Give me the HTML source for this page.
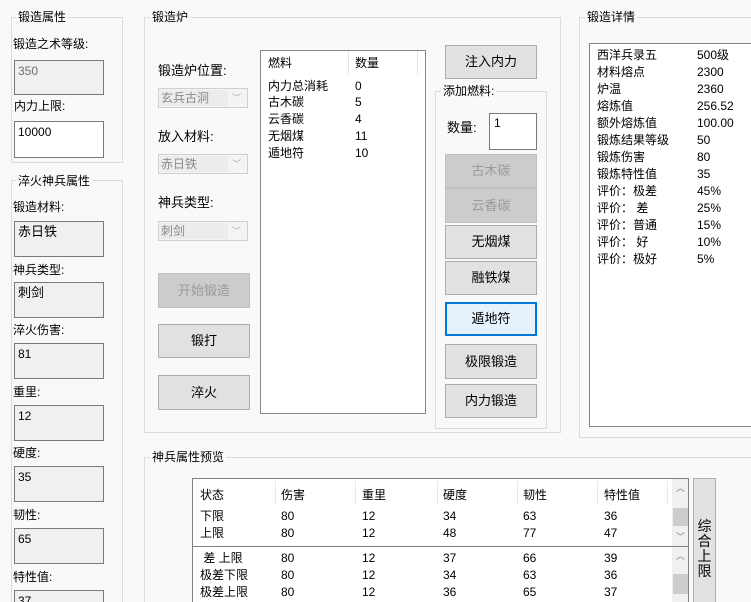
<!DOCTYPE html>
<html style="width:751px;height:602px;overflow:hidden"><head><meta charset="utf-8"><style>
*{box-sizing:border-box;margin:0;padding:0}
body{width:751px;height:602px;overflow:hidden;background:#f9f9f9;font-family:"Liberation Sans","Noto Sans CJK SC","WenQuanYi Zen Hei",sans-serif;font-size:12px;color:#000;position:relative}
.a{position:absolute;white-space:nowrap;line-height:14px}
.g{position:absolute;border:1px solid #dcdcdc}
.gt{position:absolute;background:#f9f9f9;padding:0 2px;line-height:14px}
.tb{position:absolute;border:1px solid #7a7a7a;background:#f0f0f0;padding:3px 3px;line-height:14px}
.tb.w{background:#fff}
.tb.d{color:#6d6d6d}
.cb{position:absolute;border:1px solid #cfcfcf;background:#f4f4f4;color:#8a8a8a;height:20px;line-height:18px;padding-left:2px}
.cb i{position:absolute;left:1px;top:1px;width:68px;height:16px;background:#ececec}
.cb span{position:relative}
.cb b{position:absolute;right:6px;top:0;font-weight:normal;font-size:9px;color:#aaa}
.bt{position:absolute;border:1px solid #adadad;background:#e1e1e1;text-align:center;font-size:13px}
.bt.dis{background:#cccccc;border-color:#bfbfbf;color:#9a9a9a}
.bt.f{border:2px solid #0078d7;background:#e5f1fb}
.lv{position:absolute;border:1px solid #828790;background:#fff;overflow:hidden}
.sb{position:absolute;background:#f0f0f0;width:17px}
</style></head><body>

<div class="g" style="left:11px;top:17px;width:112px;height:146px"></div>
<div class="gt" style="left:16px;top:10px">锻造属性</div>
<div class="a" style="left:13px;top:37px">锻造之术等级:</div>
<div class="tb d" style="left:14px;top:60px;width:90px;height:35px">350</div>
<div class="a" style="left:14px;top:99px">内力上限:</div>
<div class="tb w" style="left:14px;top:121px;width:90px;height:37px">10000</div>

<div class="g" style="left:11px;top:180px;width:112px;height:430px"></div>
<div class="gt" style="left:16px;top:174px">淬火神兵属性</div>
<div class="a" style="left:13px;top:200px">锻造材料:</div>
<div class="tb" style="left:14px;top:221px;width:90px;height:36px;font-size:13px">赤日铁</div>
<div class="a" style="left:13px;top:263px">神兵类型:</div>
<div class="tb" style="left:14px;top:282px;width:90px;height:36px;font-size:13px">刺剑</div>
<div class="a" style="left:13px;top:323px">淬火伤害:</div>
<div class="tb" style="left:14px;top:343px;width:90px;height:36px">81</div>
<div class="a" style="left:13px;top:385px">重里:</div>
<div class="tb" style="left:14px;top:405px;width:90px;height:36px">12</div>
<div class="a" style="left:13px;top:446px">硬度:</div>
<div class="tb" style="left:14px;top:466px;width:90px;height:36px">35</div>
<div class="a" style="left:13px;top:508px">韧性:</div>
<div class="tb" style="left:14px;top:528px;width:90px;height:36px">65</div>
<div class="a" style="left:13px;top:570px">特性值:</div>
<div class="tb" style="left:14px;top:590px;width:90px;height:36px">37</div>

<div class="g" style="left:144px;top:17px;width:417px;height:416px"></div>
<div class="gt" style="left:150px;top:10px">锻造炉</div>
<div class="a" style="left:158px;top:64px;font-size:13px">锻造炉位置:</div>
<div class="cb" style="left:158px;top:88px;width:90px"><i></i><span>玄兵古洞</span><b>﹀</b></div>
<div class="a" style="left:158px;top:130px;font-size:13px">放入材料:</div>
<div class="cb" style="left:158px;top:154px;width:90px"><i></i><span>赤日铁</span><b>﹀</b></div>
<div class="a" style="left:158px;top:196px;font-size:13px">神兵类型:</div>
<div class="cb" style="left:158px;top:221px;width:90px"><i></i><span>刺剑</span><b>﹀</b></div>
<div class="bt dis" style="left:158px;top:273px;width:92px;height:35px;line-height:33px">开始锻造</div>
<div class="bt" style="left:158px;top:324px;width:92px;height:34px;line-height:32px">锻打</div>
<div class="bt" style="left:158px;top:375px;width:92px;height:35px;line-height:33px">淬火</div>

<div class="lv" style="left:260px;top:50px;width:166px;height:364px">
 <div class="a" style="left:7px;top:5px">燃料</div>
 <div class="a" style="left:94px;top:5px">数量</div>
 <div style="position:absolute;left:87px;top:0;width:1px;height:24px;background:#e5e5e5"></div>
 <div style="position:absolute;left:156px;top:0;width:1px;height:24px;background:#e5e5e5"></div>
 <div class="a" style="left:7px;top:28px">内力总消耗</div><div class="a" style="left:94px;top:28px">0</div>
 <div class="a" style="left:7px;top:44px">古木碳</div><div class="a" style="left:94px;top:44px">5</div>
 <div class="a" style="left:7px;top:61px">云香碳</div><div class="a" style="left:94px;top:61px">4</div>
 <div class="a" style="left:7px;top:78px">无烟煤</div><div class="a" style="left:94px;top:78px">11</div>
 <div class="a" style="left:7px;top:95px">遁地符</div><div class="a" style="left:94px;top:95px">10</div>
</div>

<div class="bt" style="left:445px;top:45px;width:92px;height:34px;line-height:32px">注入内力</div>
<div class="g" style="left:435px;top:91px;width:112px;height:338px"></div>
<div class="gt" style="left:441px;top:84px">添加燃料:</div>
<div class="a" style="left:447px;top:121px;font-size:13px">数量:</div>
<div class="tb w" style="left:489px;top:113px;width:48px;height:37px;padding:2px 4px">1</div>
<div class="bt dis" style="left:445px;top:154px;width:92px;height:34px;line-height:32px">古木碳</div>
<div class="bt dis" style="left:445px;top:188px;width:92px;height:35px;line-height:33px">云香碳</div>
<div class="bt" style="left:445px;top:225px;width:92px;height:34px;line-height:32px">无烟煤</div>
<div class="bt" style="left:445px;top:261px;width:92px;height:34px;line-height:32px">融铁煤</div>
<div class="bt f" style="left:445px;top:302px;width:92px;height:34px;line-height:30px">遁地符</div>
<div class="bt" style="left:445px;top:344px;width:92px;height:35px;line-height:33px">极限锻造</div>
<div class="bt" style="left:445px;top:384px;width:92px;height:34px;line-height:32px">内力锻造</div>

<div class="g" style="left:579px;top:17px;width:180px;height:421px"></div>
<div class="gt" style="left:585px;top:10px">锻造详情</div>
<div class="lv" style="left:589px;top:43px;width:170px;height:384px;border-color:#828282">
 <div class="a" style="left:7px;top:3px;line-height:17px">西洋兵录五<br>材料熔点<br>炉温<br>熔炼值<br>额外熔炼值<br>锻炼结果等级<br>锻炼伤害<br>锻炼特性值<br>评价：极差<br>评价：&nbsp;差<br>评价：普通<br>评价：&nbsp;好<br>评价：极好</div>
 <div class="a" style="left:107px;top:3px;line-height:17px">500级<br>2300<br>2360<br>256.52<br>100.00<br>50<br>80<br>35<br>45%<br>25%<br>15%<br>10%<br>5%</div>
</div>

<div class="g" style="left:144px;top:457px;width:620px;height:160px"></div>
<div class="gt" style="left:150px;top:450px">神兵属性预览</div>
<div class="lv" style="left:192px;top:478px;width:497px;height:69px;border-color:#828282">
 <div class="a" style="left:7px;top:9px">状态</div><div class="a" style="left:88px;top:9px">伤害</div><div class="a" style="left:169px;top:9px">重里</div><div class="a" style="left:250px;top:9px">硬度</div><div class="a" style="left:330px;top:9px">韧性</div><div class="a" style="left:411px;top:9px">特性值</div>
 <div style="position:absolute;left:82px;top:2px;width:1px;height:24px;background:#e8e8e8"></div>
 <div style="position:absolute;left:162px;top:2px;width:1px;height:24px;background:#e8e8e8"></div>
 <div style="position:absolute;left:244px;top:2px;width:1px;height:24px;background:#e8e8e8"></div>
 <div style="position:absolute;left:324px;top:2px;width:1px;height:24px;background:#e8e8e8"></div>
 <div style="position:absolute;left:404px;top:2px;width:1px;height:24px;background:#e8e8e8"></div>
 <div style="position:absolute;left:474px;top:2px;width:1px;height:24px;background:#e8e8e8"></div>
 <div class="a" style="left:7px;top:29px;line-height:17px">下限<br>上限</div>
 <div class="a" style="left:88px;top:29px;line-height:17px">80<br>80</div>
 <div class="a" style="left:169px;top:29px;line-height:17px">12<br>12</div>
 <div class="a" style="left:250px;top:29px;line-height:17px">34<br>48</div>
 <div class="a" style="left:330px;top:29px;line-height:17px">63<br>77</div>
 <div class="a" style="left:411px;top:29px;line-height:17px">36<br>47</div>
 <div class="sb" style="left:479px;top:0;height:67px"><div style="position:absolute;top:2px;width:17px;text-align:center;font-size:9px;color:#777">︿</div><div style="position:absolute;top:29px;left:1px;width:15px;height:18px;background:#cdcdcd"></div><div style="position:absolute;top:51px;width:17px;text-align:center;font-size:9px;color:#777">﹀</div></div>
</div>
<div class="lv" style="left:192px;top:546px;width:497px;height:70px;border-color:#828282">
 <div class="a" style="left:7px;top:3px;line-height:17px">&nbsp;差 上限<br>极差下限<br>极差上限</div>
 <div class="a" style="left:88px;top:3px;line-height:17px">80<br>80<br>80</div>
 <div class="a" style="left:169px;top:3px;line-height:17px">12<br>12<br>12</div>
 <div class="a" style="left:250px;top:3px;line-height:17px">37<br>34<br>36</div>
 <div class="a" style="left:330px;top:3px;line-height:17px">66<br>63<br>65</div>
 <div class="a" style="left:411px;top:3px;line-height:17px">39<br>36<br>37</div>
 <div class="sb" style="left:479px;top:0;height:68px"><div style="position:absolute;top:2px;width:17px;text-align:center;font-size:9px;color:#777">︿</div><div style="position:absolute;top:27px;left:1px;width:15px;height:20px;background:#cdcdcd"></div></div>
</div>
<div class="bt" style="left:693px;top:478px;width:23px;height:130px;font-size:14px;line-height:15px;padding-top:40px">综<br>合<br>上<br>限</div>
</body></html>
